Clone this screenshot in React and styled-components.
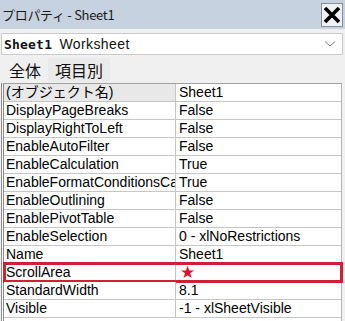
import styled, { createGlobalStyle } from "styled-components";

const GlobalStyle = createGlobalStyle`
  html, body {
    margin: 0;
    padding: 0;
    background: #f0f0f0;
  }
  body {
    font-family: "Liberation Sans", "Noto Sans CJK JP", sans-serif;
  }
`;

const properties = [
  { name: "(オブジェクト名)", value: "Sheet1", head: true },
  { name: "DisplayPageBreaks", value: "False" },
  { name: "DisplayRightToLeft", value: "False" },
  { name: "EnableAutoFilter", value: "False" },
  { name: "EnableCalculation", value: "True" },
  { name: "EnableFormatConditionsCalculation", value: "True" },
  { name: "EnableOutlining", value: "False" },
  { name: "EnablePivotTable", value: "False" },
  { name: "EnableSelection", value: "0 - xlNoRestrictions" },
  { name: "Name", value: "Sheet1" },
  { name: "ScrollArea", value: "★", marked: true },
  { name: "StandardWidth", value: "8.1" },
  { name: "Visible", value: "-1 - xlSheetVisible" },
];

export default function App() {
  return (
    <>
      <GlobalStyle />
      <Window>
        <TitleBar>
          <TitleText>プロパティ - Sheet1</TitleText>
          <CloseButton>
            <svg width="18" height="18" viewBox="0 0 18 18">
              <path d="M2 2 L16 16 M16 2 L2 16" stroke="#000" strokeWidth="3.6" />
            </svg>
          </CloseButton>
        </TitleBar>

        <ObjectSelect>
          <SelectText>
            <strong>Sheet1</strong> Worksheet
          </SelectText>
          <svg width="12" height="8" viewBox="0 0 12 8">
            <path d="M1 1.5 L6 6 L11 1.5" fill="none" stroke="#777" strokeWidth="1" />
          </svg>
        </ObjectSelect>

        <Tabs>
          <Tab $active>全体</Tab>
          <Tab>項目別</Tab>
        </Tabs>

        <Grid>
          {properties.map((p) => (
            <Row key={p.name} $marked={p.marked}>
              <NameCell $head={p.head}>{p.name}</NameCell>
              <ValueCell>
                {p.marked ? <Star>{p.value}</Star> : p.value}
              </ValueCell>
            </Row>
          ))}
        </Grid>
      </Window>
    </>
  );
}

const Window = styled.div`
  width: 345px;
  height: 321px;
  overflow: hidden;
  background: #f0f0f0;
  display: flex;
  flex-direction: column;
`;

const TitleBar = styled.div`
  height: 29px;
  display: flex;
  align-items: center;
  justify-content: space-between;
  background: #c7d2e0;
  padding: 0 2px 0 2px;
`;

const TitleText = styled.span`
  font-family: "Noto Sans CJK JP", sans-serif;
  font-size: 13px;
  color: #1a1a1a;
  letter-spacing: -0.3px;
`;

const CloseButton = styled.div`
  width: 22px;
  height: 24px;
  display: flex;
  align-items: center;
  justify-content: center;
  background: #eef0f3;
  border: 1px solid #8a8f96;
  box-sizing: border-box;
`;

const ObjectSelect = styled.div`
  margin: 4px 2px 0 1px;
  height: 22px;
  box-sizing: border-box;
  background: #fff;
  border: 1px solid #c9c9c9;
  display: flex;
  align-items: center;
  justify-content: space-between;
  padding: 0 6px 0 2px;
`;

const SelectText = styled.span`
  font-size: 14px;
  color: #111;
  letter-spacing: 0.4px;

  strong {
    font-family: "DejaVu Sans Mono", monospace;
    font-size: 13px;
    font-weight: 700;
    letter-spacing: 0.2px;
    margin-right: 3px;
  }
`;

const Tabs = styled.div`
  display: flex;
  margin: 3px 0 0 2px;
  height: 24px;
`;

const Tab = styled.div`
  padding: 0 7px;
  font-family: "Noto Sans CJK JP", sans-serif;
  font-size: 16px;
  line-height: 24px;
  color: #111;
  background: ${(p) => (p.$active ? "#f0f0f0" : "#eaeaea")};
`;

const Grid = styled.div`
  margin: 1px 3px 0 1px;
  border-top: 1px solid #a0a0a0;
  border-left: 3px double #8c8c8c;
  border-right: 1px solid #b4b4b4;
  background: #fff;
  flex: 1;
`;

const Row = styled.div`
  display: grid;
  grid-template-columns: 172px 1fr;
  height: 18px;
  box-sizing: border-box;
  border-bottom: 1px solid #c6c6c6;
  position: relative;

  ${(p) =>
    p.$marked &&
    `
    &::after {
      content: "";
      position: absolute;
      left: -1px;
      right: -2px;
      top: -2px;
      bottom: -2px;
      border: 3px solid #cf2035;
      pointer-events: none;
    }
  `}
`;

const NameCell = styled.div`
  font-family: "Liberation Sans", "Noto Sans CJK JP", sans-serif;
  font-size: 14px;
  line-height: 17px;
  padding-left: 2px;
  color: #000;
  white-space: nowrap;
  overflow: hidden;
  border-right: 1px solid #c6c6c6;
  background: ${(p) => (p.$head ? "#e8e8e8" : "#fff")};
`;

const ValueCell = styled.div`
  font-size: 14px;
  line-height: 17px;
  padding-left: 3px;
  color: #000;
  white-space: nowrap;
  display: flex;
  align-items: center;
`;

const Star = styled.span`
  color: #e0102a;
  font-family: "DejaVu Sans", sans-serif;
  font-size: 17px;
  line-height: 17px;
  margin-left: 1px;
`;
